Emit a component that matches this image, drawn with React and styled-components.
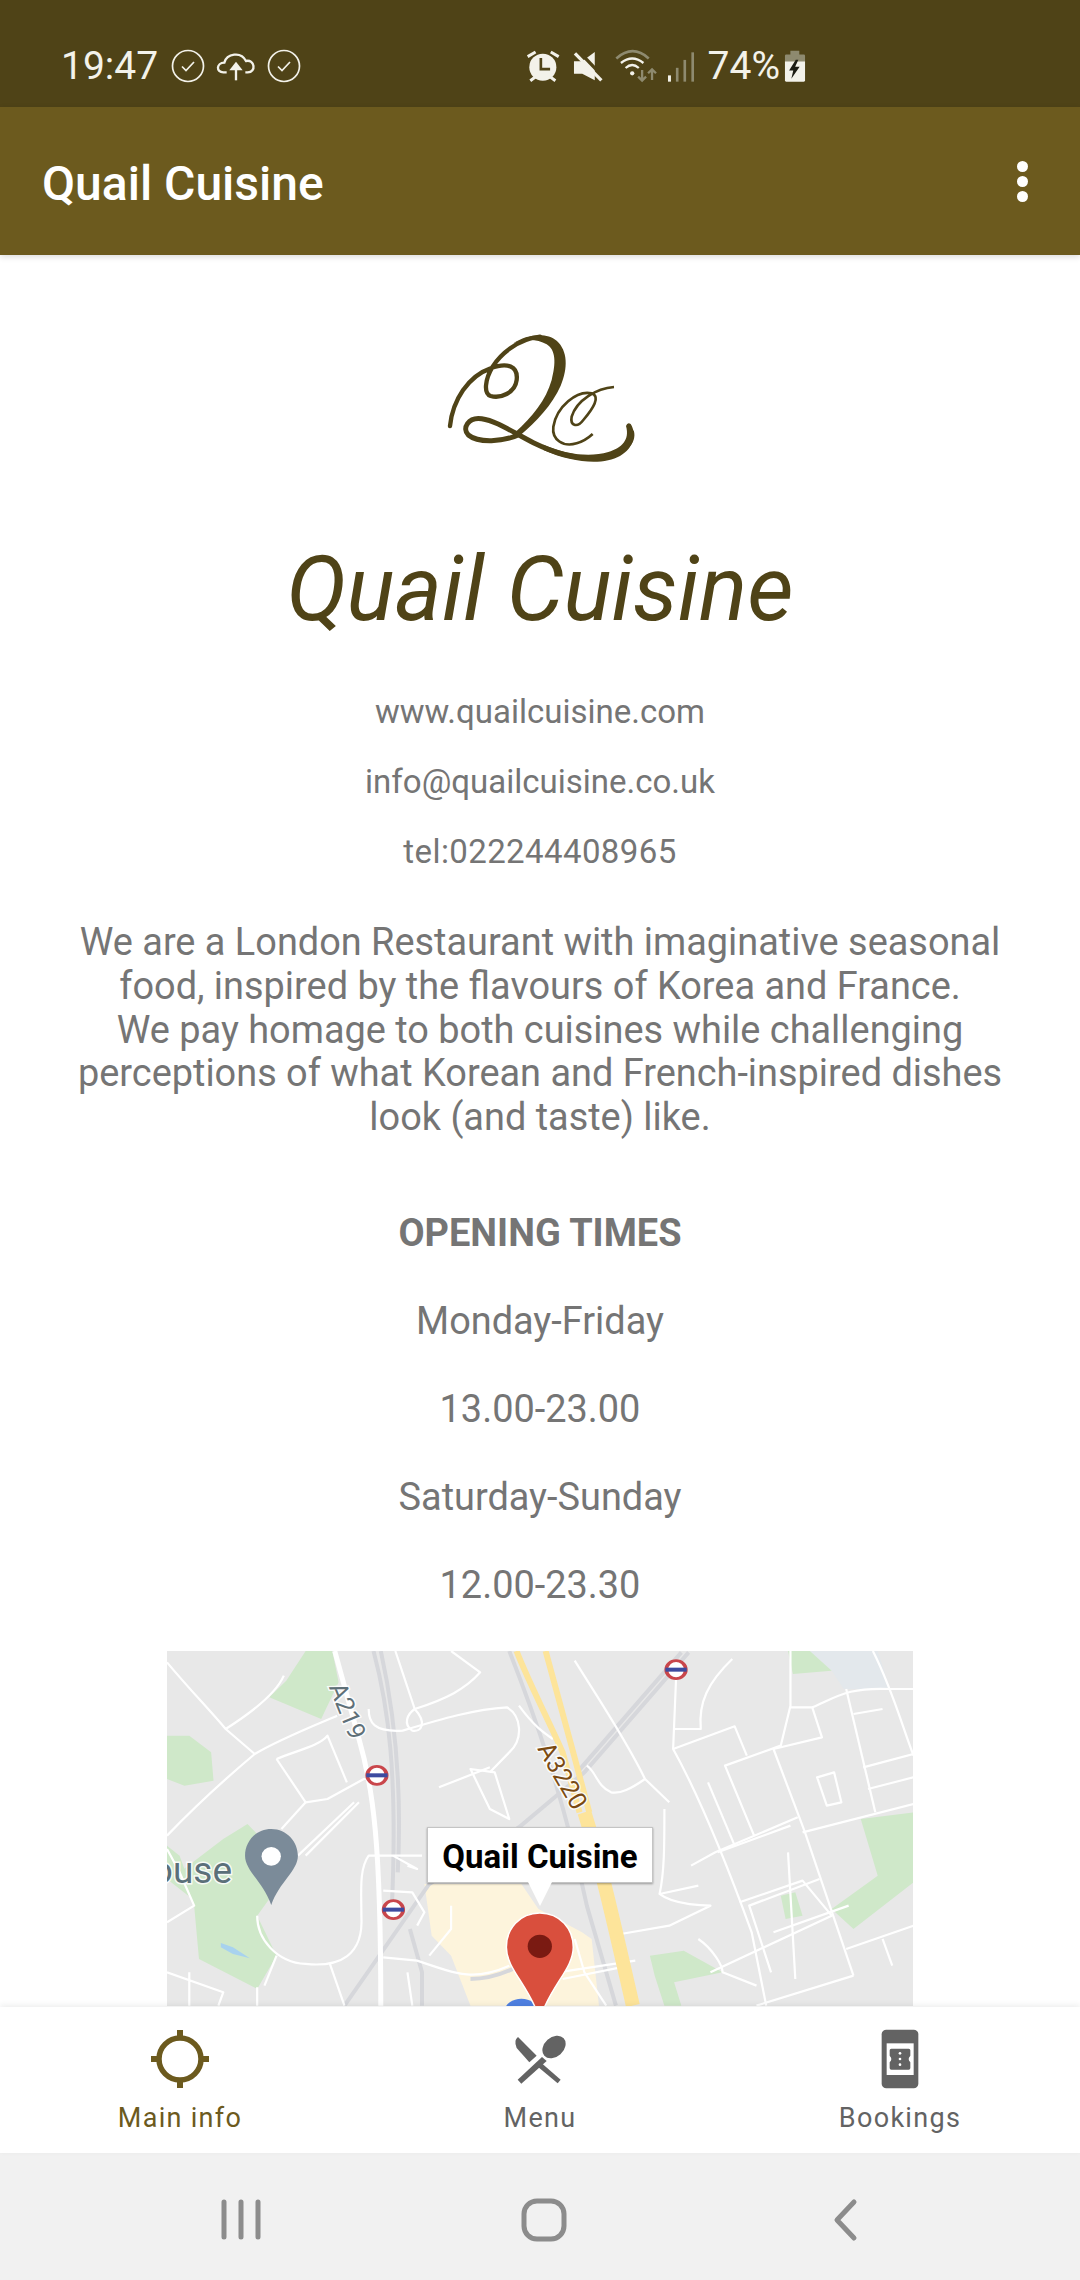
import React from "react";
import styled, { createGlobalStyle } from "styled-components";

const COLORS = {
  statusBar: "#4f4317",
  appBar: "#6c5a1e",
  statusText: "#f3f2ea",
  body: "#757575",
  tabIdle: "#636363",
  nav: "#f1f1f1",
  navIcon: "#8c8c8c",
};

const GlobalStyle = createGlobalStyle`
  html, body {
    margin: 0;
    padding: 0;
    background: #fff;
    font-family: Roboto, "Liberation Sans", sans-serif;
  }
`;

const Page = styled.div`
  width: 1080px;
  height: 2280px;
  display: flex;
  flex-direction: column;
  overflow: hidden;
`;

const StatusBar = styled.div`
  height: 107px;
  flex: none;
  background: ${COLORS.statusBar};
  color: ${COLORS.statusText};
  display: flex;
  align-items: center;
  justify-content: space-between;
  padding: 25px 274px 0 61px;
  box-sizing: border-box;
`;

const StatusGroup = styled.div`
  display: flex;
  align-items: center;
  gap: ${(p) => p.$gap || 10}px;

  svg {
    flex: none;
  }
`;

const StatusText = styled.span`
  font-size: 39px;
  font-weight: 400;
  line-height: 44px;
  margin-right: ${(p) => p.$after || 0}px;
  margin-left: ${(p) => p.$before || 0}px;
`;

const AppBar = styled.header`
  height: 148px;
  flex: none;
  box-sizing: border-box;
  background: ${COLORS.appBar};
  display: flex;
  align-items: center;
  justify-content: space-between;
  padding: 0 52px 0 42px;
  box-shadow: 0 2px 6px rgba(0, 0, 0, 0.14);
  z-index: 2;
`;

const AppTitle = styled.h1`
  margin: 5px 0 0;
  color: #fff;
  font-size: 48px;
  font-weight: 500;
  line-height: 56px;
`;

const Dots = styled.div`
  display: flex;
  flex-direction: column;
  gap: 4px;
  width: 11px;

  span {
    display: block;
    width: 11px;
    height: 11px;
    border-radius: 50%;
    background: #fff;
  }
`;

const Content = styled.main`
  flex: 1;
  min-height: 0;
  overflow: hidden;
  display: flex;
  flex-direction: column;
  align-items: center;
  padding-top: 45px;
  text-align: center;
  color: ${COLORS.body};

  & > * {
    flex: none;
  }
`;

const Brand = styled.h2`
  margin: 40px 0 0;
  color: ${COLORS.statusBar};
  font-size: 90px;
  font-style: italic;
  font-weight: 400;
  line-height: 100px;
`;

const Contact = styled.div`
  margin-top: 53px;
  display: flex;
  flex-direction: column;
  gap: 32px;
  font-size: 33px;
  line-height: 38px;
`;

const Phone = styled.span`
  letter-spacing: 0.4px;
`;

const About = styled.p`
  margin: 50px 0 0;
  width: 960px;
  font-size: 37.9px;
  line-height: 43.8px;
`;

const Times = styled.div`
  margin-top: 71px;
  display: flex;
  flex-direction: column;
  gap: 44px;
  font-size: 37.9px;
  line-height: 44px;

  strong {
    font-weight: 700;
  }
`;

const MapFrame = styled.div`
  position: relative;
  width: 746px;
  height: 355px;
  margin-top: 44px;
  overflow: hidden;
  background: #e8e8e8;

  svg {
    display: block;
  }
`;

const Callout = styled.div`
  position: absolute;
  left: 50%;
  top: 176px;
  transform: translateX(-50%);
  width: 226px;
  height: 56px;
  box-sizing: border-box;
  background: #fff;
  border: 1px solid #c4c4c4;
  box-shadow: 0 1px 2px rgba(0, 0, 0, 0.35);
  color: #000;
  font-size: 33px;
  font-weight: 700;
  line-height: 57px;
  text-align: center;

  &::after {
    content: "";
    position: absolute;
    left: 50%;
    top: 100%;
    width: 24px;
    height: 24px;
    margin-left: -12px;
    background: #fff;
    clip-path: polygon(0 0, 100% 0, 50% 100%);
  }
`;

const TabBar = styled.nav`
  height: 146px;
  flex: none;
  background: #fff;
  display: grid;
  grid-template-columns: repeat(3, 360px);
  box-shadow: 0 -2px 6px rgba(0, 0, 0, 0.07);
  z-index: 2;
`;

const Tab = styled.div`
  padding-top: 22px;
  display: flex;
  flex-direction: column;
  align-items: center;
  color: ${(p) => (p.$active ? COLORS.appBar : COLORS.tabIdle)};
  font-size: 27px;
  letter-spacing: 1.3px;
  line-height: 32px;

  svg {
    display: block;
    margin-bottom: 13px;
  }
`;

const NavBar = styled.div`
  height: 127px;
  flex: none;
  background: ${COLORS.nav};

  svg {
    display: block;
  }
`;

const MapLabel = styled.text`
  font-family: Roboto, sans-serif;
  paint-order: stroke;
  stroke: rgba(255, 255, 255, 0.85);
  stroke-width: 3px;
`;

const CheckIcon = () => (
  <svg width="34" height="34" viewBox="0 0 34 34" fill="none" stroke={COLORS.statusText}>
    <circle cx="17" cy="17" r="15.5" strokeWidth="1.7" />
    <path d="M11 17.5 L15 21.5 L23 13" strokeWidth="1.7" />
  </svg>
);

const CloudIcon = () => (
  <svg width="40" height="30" viewBox="530 100 120 90" fill="none" stroke={COLORS.statusText}>
    <path
      d="M562 164 H552 C530 164 530 136 555 135 C562 108 605 100 620 130 C646 124 652 164 625 164 H618"
      strokeWidth="7"
    />
    <path d="M590 188 V150" strokeWidth="7" />
    <path d="M570 158 L590 132 L610 158 Z" fill={COLORS.statusText} stroke="none" />
  </svg>
);

const AlarmIcon = () => (
  <svg width="37" height="33" viewBox="45 88 110 100" fill="none">
    <path
      d="M52 108 L76 94 M122 94 L146 108 M60 181 L76 169 M136 181 L120 169"
      stroke={COLORS.statusText}
      strokeWidth="9"
    />
    <circle cx="98" cy="140" r="41" fill={COLORS.statusText} />
    <path d="M92 112 V146 H120" stroke={COLORS.statusBar} strokeWidth="8" />
  </svg>
);

const MuteIcon = () => (
  <svg width="32" height="33" viewBox="190 88 95 100">
    <path d="M195 122 H220 L258 94 V180 L220 160 H195 Z" fill={COLORS.statusText} />
    <path d="M206 88 L290 176" stroke={COLORS.statusBar} strokeWidth="10" />
    <path d="M198 98 L278 180" stroke={COLORS.statusText} strokeWidth="10" />
  </svg>
);

const WifiIcon = () => (
  <svg width="43" height="35" viewBox="315 85 130 105" fill="none">
    <path d="M322 113 C355 84 388 84 420 113" stroke="#8e8a6f" strokeWidth="8" />
    <path d="M336 127 Q370 100 404 127" stroke={COLORS.statusText} strokeWidth="7" />
    <path d="M350 142 Q370 124 390 142" stroke={COLORS.statusText} strokeWidth="7" />
    <circle cx="370" cy="158" r="6.5" fill={COLORS.statusText} />
    <path
      d="M400 148 V178 M388 168 L400 180 L412 168 M430 178 V148 M418 158 L430 146 L442 158"
      stroke="#8e8a6f"
      strokeWidth="7"
    />
  </svg>
);

const SignalIcon = () => (
  <svg width="28" height="33" viewBox="465 88 85 100">
    <rect x="468" y="165" width="9" height="19" fill={COLORS.statusText} />
    <rect x="492" y="142" width="8" height="42" fill="#8e8a6f" />
    <rect x="515" y="118" width="8" height="66" fill="#8e8a6f" />
    <rect x="539" y="95" width="8" height="89" fill="#8e8a6f" />
  </svg>
);

const BatteryIcon = () => (
  <svg width="22" height="35" viewBox="822 85 69 105">
    <path d="M842 88 H870 V100 H884 Q888 100 888 104 V124 H825 V104 Q825 100 829 100 H842 Z" fill="#8e8a6f" />
    <path d="M825 122 H888 V181 Q888 185 884 185 H829 Q825 185 825 181 Z" fill={COLORS.statusText} />
    <path d="M859 116 L838 150 H851 L845 176 L871 138 H857 L867 116 Z" fill="#1c1c14" />
  </svg>
);

const Logo = () => (
  <svg width="280" height="200" viewBox="0 0 840 600" fill="none" stroke={COLORS.statusBar}>
    <path
      d="M150 378 C158 300 205 228 272 205 C322 186 355 198 350 240 C345 280 300 296 272 288 C250 280 255 238 278 200 C300 165 350 118 420 110"
      strokeWidth="13"
      strokeLinecap="round"
    />
    <path
      d="M340 130 C380 102 440 96 470 122 C504 152 504 205 482 257 C457 314 410 364 358 408 L344 398 C398 350 438 300 455 240 C468 190 468 150 440 133 C412 116 372 116 340 130 Z"
      fill={COLORS.statusBar}
      stroke="none"
    />
    <path
      d="M356 404 C310 426 235 430 205 405 C185 385 205 350 245 356 C290 362 340 398 400 428 C470 462 550 484 620 470 C680 456 702 420 694 394"
      strokeWidth="15"
    />
    <path
      d="M430 434 C500 464 570 472 625 456 C665 444 690 420 678 378 Q682 366 692 372 C710 400 704 442 660 468 C610 496 520 490 430 450 Z"
      fill={COLORS.statusBar}
      stroke="none"
    />
    <path
      d="M642 261 C590 265 530 300 515 350 C510 375 530 386 550 360 C580 325 602 290 575 280 C530 270 470 320 460 380 C455 420 490 442 530 430 C550 424 565 414 578 402"
      strokeWidth="8"
    />
  </svg>
);

const WHITE_ROADS = [
  "M14 70 C60 150 100 210 135 270 L195 345",
  "M14 590 C80 490 150 400 195 345 C240 305 300 270 365 230",
  "M255 110 C240 160 200 210 135 270",
  "M240 360 L300 490 L345 480 L420 420 L447 420",
  "M240 360 C280 335 330 320 345 290 L385 430",
  "M300 490 L250 570",
  "M485 36 L525 210 C590 180 630 150 660 100 L600 36",
  "M525 210 C510 225 500 255 520 275 C540 280 550 250 525 210",
  "M430 210 C430 250 440 280 500 275 C580 240 650 210 715 205 C745 230 750 300 720 340 L680 400",
  "M740 200 C770 260 790 280 810 300",
  "M575 445 L680 385",
  "M640 390 L680 510 L720 540 L690 400 Z",
  "M855 65 C900 170 960 300 1000 420 C970 450 950 465 930 460 C900 440 900 400 880 380",
  "M1000 420 L1050 490",
  "M1064 120 L1058 330 C1100 440 1160 640 1220 880 L1250 1100",
  "M1058 330 L1185 262 L1210 350",
  "M1180 60 C1130 130 1110 190 1115 270 L1060 270",
  "M1300 36 L1300 200 L1280 320 L1165 380 L1225 590",
  "M1300 205 L1345 205 L1365 295 L1265 330 L1330 580 L1430 1010",
  "M1345 205 C1400 170 1420 145 1505 150 L1554 150",
  "M1470 36 C1510 150 1530 260 1554 350",
  "M1415 150 L1475 520",
  "M1430 225 L1490 210",
  "M1450 385 L1554 345 M1460 450 L1554 415",
  "M1325 580 L1554 495 M1145 640 L1315 535 M1095 680 L1145 640",
  "M1150 640 L1300 560",
  "M1355 415 L1390 400 L1405 490 L1375 500 Z",
  "M1130 430 L1185 620",
  "M1360 720 L1215 800 L1260 1000",
  "M1195 790 L1325 725 L1385 830 L1135 1000",
  "M1265 880 L1420 800",
  "M1415 930 L1554 860",
  "M1430 1010 L1230 1100",
  "M1040 510 C1040 620 1040 700 1030 765 L1110 740",
  "M1030 765 C1060 800 1130 800 1135 800 L1050 860 L950 885",
  "M1295 640 L1310 1020 M1490 900 L1510 980",
  "M200 830 C200 900 240 970 300 975 C370 985 420 950 415 830 C415 760 410 690 430 650 L540 650",
  "M480 650 L530 690 L510 680",
  "M14 850 L70 800 L40 700 L14 630",
  "M14 1000 L130 1060 L120 1100 M60 1000 L60 1100",
  "M350 975 L380 1100 M200 1045 L200 1100 M240 950 L215 1040",
  "M460 955 L530 965 C620 1010 650 1025 720 980",
  "M510 1000 L520 1100 M600 800 L600 870 L555 950",
  "M855 900 L875 1000 L920 1100",
  "M820 1000 L980 965 M830 1020 L950 985",
  "M1110 900 C1140 930 1160 980 1160 1000 L1230 1040",
  "M284 650 L400 490 M300 650 L410 490",
  "M460 755 L520 760 L545 820 L530 860",
];

const RAILS = [
  "M440 36 C470 200 490 400 478 800",
  "M455 36 C480 200 500 420 490 700",
  "M720 36 C770 220 830 460 880 800 L940 1100",
  "M1090 40 L875 400 L740 565 L555 735 L380 1100",
  "M1075 40 L860 400",
  "M515 870 L540 1000 L540 1100",
  "M640 1020 C700 1020 760 970 780 940",
];

const StaticMap = () => (
  <svg width="746" height="355" viewBox="0 0 746 355">
    {/* artwork traced at the crop's scale, squeezed back to real pixels */}
    <g transform="scale(0.4848 0.3333) translate(-14 -36)">
      <rect x="14" y="36" width="1540" height="1064" fill="#e8e8e8" />
      <path d="M1340 36 H1480 L1505 150 H1410 L1385 95 Z" fill="#e3e8ec" />
      <g fill="#cfe8c9">
        <path d="M300 36 H355 L368 130 L332 240 L225 175 L260 125 Z" />
        <path d="M14 290 H60 L105 340 L110 425 L50 440 L14 420 Z" />
        <path d="M1295 36 H1340 L1385 95 L1305 105 Z" />
        <path d="M180 555 L250 660 L225 780 L200 830 L240 950 L200 1050 L80 960 L70 800 L40 700 L130 600 Z" />
        <path d="M14 620 L40 650 L75 790 L14 720 Z" />
        <path d="M1445 540 L1554 520 V730 L1430 870 L1385 810 L1480 710 Z" />
        <path d="M1280 770 L1310 760 L1325 830 L1290 840 Z" />
        <path d="M1010 950 L1080 935 L1160 1000 L1060 1030 L1075 1100 H1040 L1020 1010 Z" />
      </g>
      <path d="M125 912 L150 925 L185 958 L150 945 L125 925 Z" fill="#a8d2ee" />
      <path d="M545 735 H745 L780 810 L870 880 L890 900 L905 1100 H640 L600 950 L560 890 Z" fill="#fdf4dc" />
      <g fill="none" stroke="#d6d7db" strokeWidth="4">
        {RAILS.map((d) => (
          <path key={d} d={d} vectorEffect="non-scaling-stroke" />
        ))}
      </g>
      <g fill="none" stroke="#fff" strokeWidth="2.2" strokeLinejoin="round">
        {WHITE_ROADS.map((d) => (
          <path key={d} d={d} vectorEffect="non-scaling-stroke" />
        ))}
      </g>
      <g fill="none">
        <path d="M360 36 L410 300 C440 450 455 620 455 1100" stroke="#fff" strokeWidth="5" vectorEffect="non-scaling-stroke" />
        <path d="M735 36 C760 130 800 240 830 340 L865 520" stroke="#fde49a" strokeWidth="6" vectorEffect="non-scaling-stroke" />
        <path d="M795 36 L850 330 L885 520" stroke="#fde49a" strokeWidth="6" vectorEffect="non-scaling-stroke" />
        <path d="M875 520 C910 680 940 880 975 1100" stroke="#fde49a" strokeWidth="14" vectorEffect="non-scaling-stroke" />
      </g>
      {[
        [1064, 92],
        [447, 409],
        [481, 812],
      ].map(([cx, cy]) => (
        <g key={cx}>
          <ellipse cx={cx} cy={cy} rx="20" ry="27" fill="#fff" stroke="#c9464b" strokeWidth="8" />
          <rect x={cx - 22} y={cy - 6} width="44" height="12" fill="#3d4ba0" />
        </g>
      ))}
      <path
        d="M229 570 C262 570 284 610 284 650 C284 695 245 730 229 798 C213 730 175 695 175 650 C175 610 196 570 229 570 Z"
        fill="#7b8b99"
      />
      <ellipse cx="229" cy="652" rx="20" ry="28" fill="#fff" />
      <ellipse cx="745" cy="1115" rx="34" ry="36" fill="#4f80e1" />
      <path
        d="M783 822 C825 822 852 870 852 925 C852 990 805 1040 783 1140 C761 1040 714 990 714 925 C714 870 741 822 783 822 Z"
        fill="#d94f3d"
        stroke="#fff"
        strokeWidth="1.5"
        vectorEffect="non-scaling-stroke"
      />
      <ellipse cx="783" cy="922" rx="25" ry="35" fill="#7a1a12" />
    </g>
    <MapLabel x="65" y="232" textAnchor="end" fontSize="37" fill="#5b7079">
      ouse
    </MapLabel>
    <MapLabel x="180" y="60" textAnchor="middle" fontSize="25" fill="#5f7078" transform="rotate(68 180 60)" dy="8">
      A219
    </MapLabel>
    <MapLabel x="395" y="125" textAnchor="middle" fontSize="25" fill="#7a4a12" transform="rotate(60 395 125)" dy="8">
      A3220
    </MapLabel>
  </svg>
);

const CrosshairIcon = () => (
  <svg width="60" height="60" viewBox="0 0 60 60" fill="none" stroke={COLORS.appBar}>
    <circle cx="30" cy="30" r="21" strokeWidth="5.5" />
    <path d="M30 1 V10 M30 50 V59 M1 30 H10 M50 30 H59" strokeWidth="6" />
  </svg>
);

const CutleryIcon = () => (
  <svg width="60" height="60" viewBox="60 88 180 180" fill={COLORS.tabIdle}>
    <path d="M84 112 L140 168 L118 188 L80 145 Q70 122 84 112 Z" />
    <path d="M150 186 L212 240 L203 251 L138 197 Z" />
    <ellipse cx="192" cy="142" rx="39" ry="29" transform="rotate(-42 192 142)" />
    <path d="M156 172 L170 184 L94 252 L83 240 Z" />
  </svg>
);

const BookingIcon = () => (
  <svg width="60" height="60" viewBox="1138 88 180 180">
    <rect x="1173" y="90" width="110" height="176" rx="14" fill={COLORS.tabIdle} />
    <rect x="1188" y="131" width="81" height="95" fill="#fff" />
    <path
      d="M1202 147 H1254 Q1259 147 1259 152 V168 Q1249 178 1259 188 V205 Q1259 210 1254 210 H1202 Q1197 210 1197 205 V188 Q1207 178 1197 168 V152 Q1197 147 1202 147 Z"
      fill={COLORS.tabIdle}
    />
    <circle cx="1228" cy="161" r="4" fill="#fff" />
    <circle cx="1228" cy="178" r="4" fill="#fff" />
    <circle cx="1228" cy="195" r="4" fill="#fff" />
  </svg>
);

const NavIcons = () => (
  <svg width="1080" height="127" viewBox="0 2153 1080 127" fill="none" stroke={COLORS.navIcon} strokeWidth="5" strokeLinecap="round">
    <path d="M224 2202 V2237 M241 2202 V2237 M258 2202 V2237" />
    <rect x="524" y="2201" width="40" height="38" rx="13" />
    <path d="M854 2202 L837 2220 L854 2238" strokeLinejoin="round" />
  </svg>
);

export default function App() {
  return (
    <Page>
      <GlobalStyle />
      <StatusBar>
        <StatusGroup $gap={11}>
          <StatusText $after={2}>19:47</StatusText>
          <CheckIcon />
          <CloudIcon />
          <CheckIcon />
        </StatusGroup>
        <StatusGroup $gap={10}>
          <AlarmIcon />
          <MuteIcon />
          <WifiIcon />
          <SignalIcon />
          <StatusText $before={3} $after={-6}>
            74%
          </StatusText>
          <BatteryIcon />
        </StatusGroup>
      </StatusBar>
      <AppBar>
        <AppTitle>Quail Cuisine</AppTitle>
        <Dots>
          <span />
          <span />
          <span />
        </Dots>
      </AppBar>
      <Content>
        <Logo />
        <Brand>Quail Cuisine</Brand>
        <Contact>
          <span>www.quailcuisine.com</span>
          <span>info@quailcuisine.co.uk</span>
          <Phone>tel:022244408965</Phone>
        </Contact>
        <About>
          We are a London Restaurant with imaginative seasonal food, inspired by the flavours of Korea and France.
          <br />
          We pay homage to both cuisines while challenging perceptions of what Korean and French-inspired dishes look
          (and taste) like.
        </About>
        <Times>
          <strong>OPENING TIMES</strong>
          <span>Monday-Friday</span>
          <span>13.00-23.00</span>
          <span>Saturday-Sunday</span>
          <span>12.00-23.30</span>
        </Times>
        <MapFrame>
          <StaticMap />
          <Callout>Quail Cuisine</Callout>
        </MapFrame>
      </Content>
      <TabBar>
        <Tab $active>
          <CrosshairIcon />
          Main info
        </Tab>
        <Tab>
          <CutleryIcon />
          Menu
        </Tab>
        <Tab>
          <BookingIcon />
          Bookings
        </Tab>
      </TabBar>
      <NavBar>
        <NavIcons />
      </NavBar>
    </Page>
  );
}
